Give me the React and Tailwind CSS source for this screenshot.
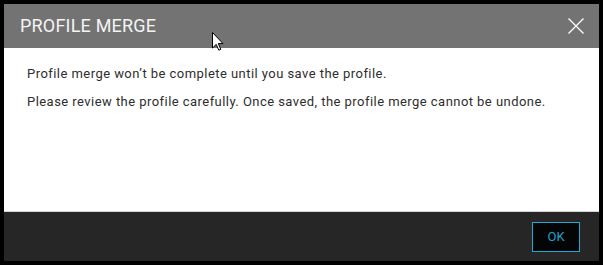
export default function App() {
  return (
    <div className="relative w-[603px] h-[265px] bg-black p-1 font-['Roboto','Liberation_Sans',sans-serif]">
      <div className="flex flex-col h-full">
        <div className="h-[44px] shrink-0 bg-[#737373] flex items-center justify-between pl-[16px] pr-[15px]">
          <h2 className="text-[18px] leading-none text-[#f4f4f4] tracking-[0.2px]">PROFILE MERGE</h2>
          <button className="w-[16px] h-[16px] text-white">
            <svg width="16" height="16" viewBox="0 0 16 16" fill="none" stroke="currentColor" strokeWidth="1.3">
              <path d="M0.5 0.5 L15.5 15.5 M15.5 0.5 L0.5 15.5" />
            </svg>
          </button>
        </div>

        <div className="flex-1 bg-white border-b border-[#d4d4d4] pl-[23px] pr-[20px] pt-[16px] text-[13px] leading-[19px] tracking-[0.45px] text-[#2e2e2e]">
          <p>Profile merge won’t be complete until you save the profile.</p>
          <p className="mt-[9px]">
            Please review the profile carefully. Once saved, the profile merge cannot be undone.
          </p>
        </div>

        <div className="h-[49px] shrink-0 bg-[#262626] flex items-center justify-end pr-[19px]">
          <button className="w-[48px] h-[30px] bg-[#050505] border border-[#1ea9da] text-[#1ba2cf] text-[13px]">
            OK
          </button>
        </div>
      </div>

      <svg className="absolute left-[212px] top-[32px]" width="12" height="19" viewBox="0 0 12 19">
        <path d="M0.5 0.5 L0.5 16 L4.2 12.4 L6.8 18.2 L8.8 17.3 L6.3 11.6 L11 11.6 Z" fill="white" stroke="black" strokeWidth="1" />
      </svg>
    </div>
  );
}
